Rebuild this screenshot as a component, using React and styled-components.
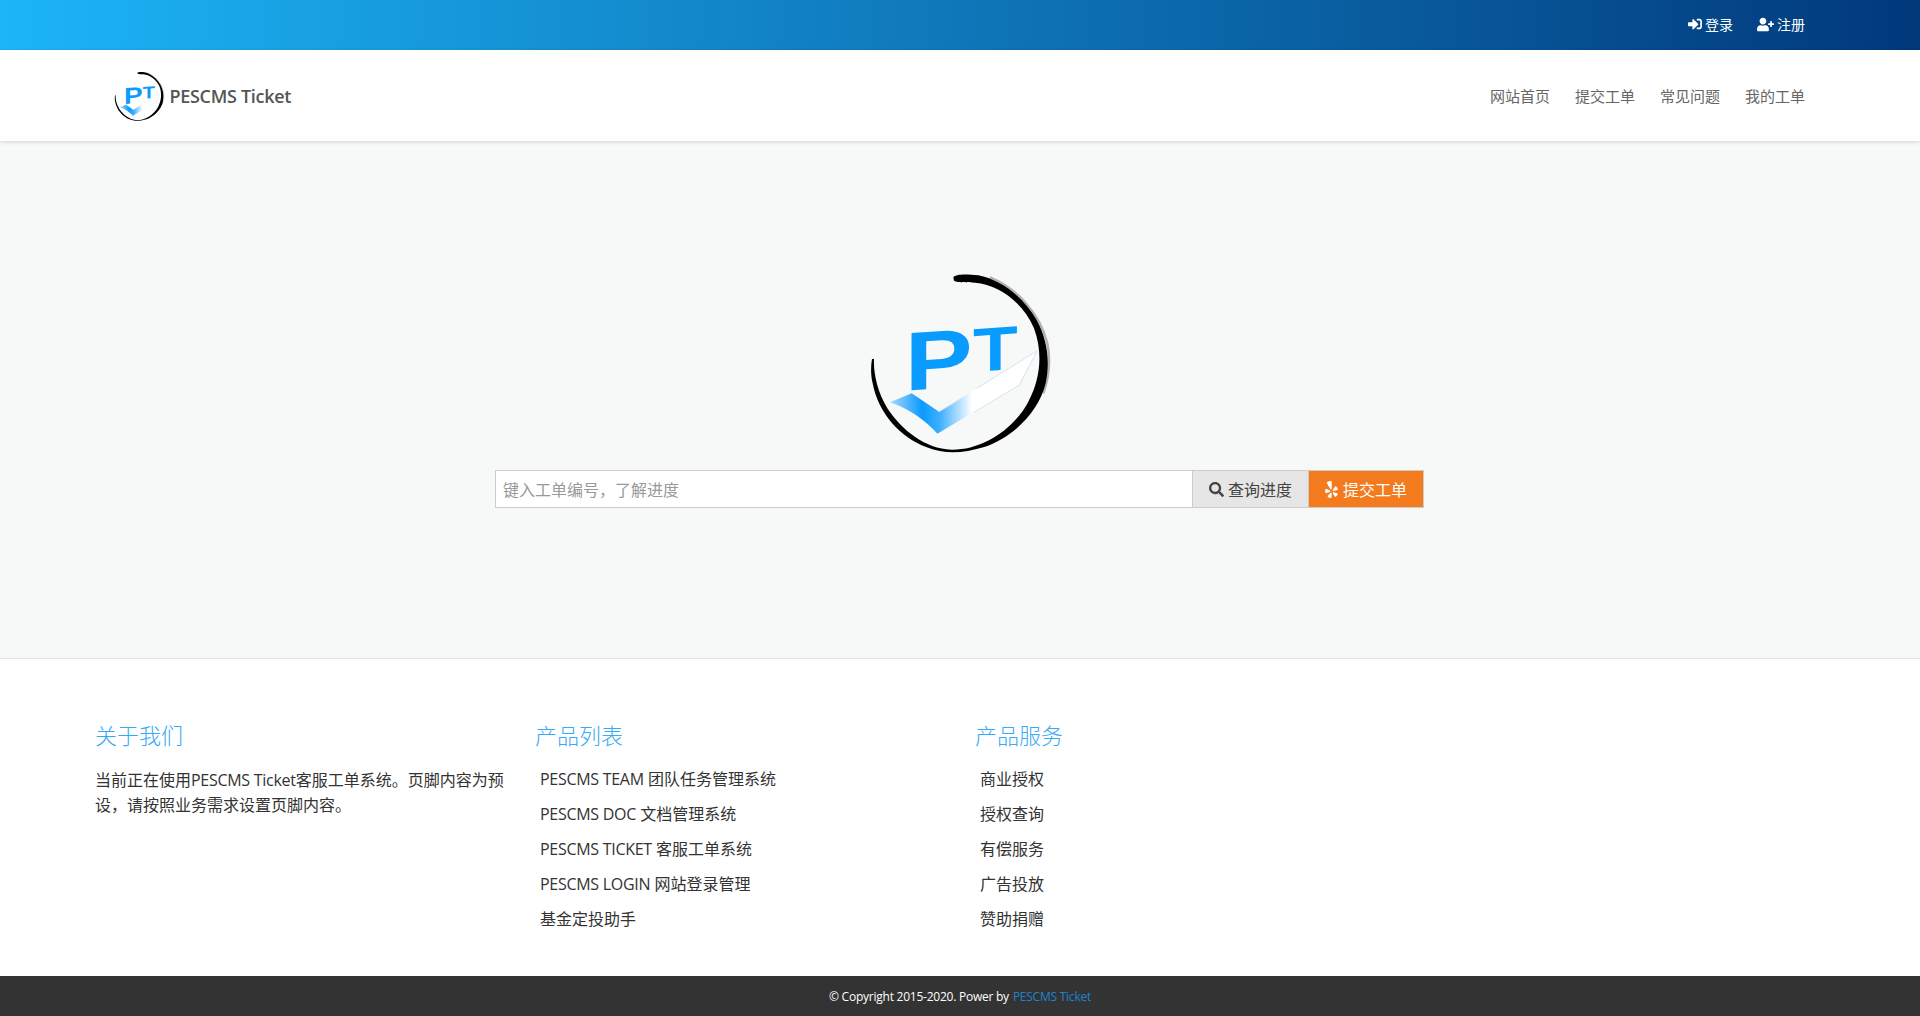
import React from 'react'
import styled, { createGlobalStyle } from 'styled-components'
import { FaSignInAlt, FaUserPlus, FaSearch, FaYelp } from 'react-icons/fa'

const products = [
    { latin: 'PESCMS TEAM', name: ' 团队任务管理系统' },
    { latin: 'PESCMS DOC', name: ' 文档管理系统' },
    { latin: 'PESCMS TICKET', name: ' 客服工单系统' },
    { latin: 'PESCMS LOGIN', name: ' 网站登录管理' },
    { latin: '', name: '基金定投助手' },
]
const services = ['商业授权', '授权查询', '有偿服务', '广告投放', '赞助捐赠']
const navItems = ['网站首页', '提交工单', '常见问题', '我的工单']

const Logo = ({ size }) => (
    <LogoSvg $size={size} viewBox="0 0 660 600">
        <defs>
            <linearGradient id="checkFill" x1="120" y1="0" x2="560" y2="0" gradientUnits="userSpaceOnUse">
                <stop offset="0" stopColor="#a8d8fd" />
                <stop offset="0.22" stopColor="#0a9bff" />
                <stop offset="0.34" stopColor="#3fb0ff" />
                <stop offset="0.56" stopColor="#ffffff" />
                <stop offset="1" stopColor="#ffffff" />
            </linearGradient>
        </defs>
        <path
            d="M120 427 L185 400 L267 455 L562 272 L508 375 L262 521 C225 480 175 445 120 427 Z"
            fill="url(#checkFill)"
        />
        <path d="M340 412 L267 455 M562 272 L508 375 L370 458 M562 272 L380 385" fill="none" stroke="#d3e3f4" strokeWidth="3" />
        <text x="0" y="0" fontFamily="'Liberation Sans', sans-serif" fontWeight="700" fontSize="250" fill="#0a9bff" transform="matrix(1.22 -0.08 0 1 164 392)">P</text>
        <text x="0" y="0" fontFamily="'Liberation Sans', sans-serif" fontWeight="700" fontSize="186" fill="#0a9bff" transform="matrix(1.18 -0.08 0 1 369 336)">T</text>
        <path
            d="M420 52 C500 85 570 160 592 250 C602 300 598 350 580 400"
            fill="none"
            stroke="#777"
            strokeOpacity="0.55"
            strokeWidth="7"
        />
        <path
            d="M310 52 C318 42 345 42 385 46 C450 58 520 110 560 180 C590 235 602 300 587 370 C567 455 490 532 400 562 C340 580 285 584 230 562 C150 532 85 460 68 370 C62 345 62 320 66 297 L72 297 C70 340 82 395 112 445 C155 510 225 567 305 569 C395 570 490 510 535 425 C570 360 580 280 552 205 C520 130 450 75 375 68 C350 66 325 70 312 62 Z"
            fill="#000"
        />
    </LogoSvg>
)

const App = () => {
    return (
        <Page>
            <GlobalStyle />
            <TopBar>
                <TopLink><FaSignInAlt size={14} /> 登录</TopLink>
                <TopLink><FaUserPlus size={17} /> 注册</TopLink>
            </TopBar>

            <NavBar>
                <Brand>
                    <Logo size={55} />
                    <BrandName>PESCMS Ticket</BrandName>
                </Brand>
                <NavMenu>
                    {navItems.map((item) => <NavLink key={item}>{item}</NavLink>)}
                </NavMenu>
            </NavBar>

            <Hero>
                <Logo size={200} />
                <SearchForm onSubmit={(e) => e.preventDefault()}>
                    <SearchInput type="text" placeholder="键入工单编号，了解进度" />
                    <QueryButton><FaSearch size={15} /> 查询进度</QueryButton>
                    <SubmitButton><FaYelp size={17} /> 提交工单</SubmitButton>
                </SearchForm>
            </Hero>

            <Footer>
                <Column>
                    <ColumnTitle>关于我们</ColumnTitle>
                    <About>当前正在使用<Latin>PESCMS Ticket</Latin>客服工单系统。页脚内容为预设，请按照业务需求设置页脚内容。</About>
                </Column>
                <Column>
                    <ColumnTitle>产品列表</ColumnTitle>
                    <LinkList>
                        {products.map((item) => <LinkItem key={item.name}><Latin>{item.latin}</Latin>{item.name}</LinkItem>)}
                    </LinkList>
                </Column>
                <Column>
                    <ColumnTitle>产品服务</ColumnTitle>
                    <LinkList>
                        {services.map((item) => <LinkItem key={item}>{item}</LinkItem>)}
                    </LinkList>
                </Column>
            </Footer>

            <CopyRight>
                © Copyright 2015-2020. Power by <CopyLink>PESCMS Ticket</CopyLink>
            </CopyRight>
        </Page>
    )
}

export default App

const GlobalStyle = createGlobalStyle`
    html, body {
        margin: 0;
        padding: 0;
        background: #fff;
    }
    * {
        box-sizing: border-box;
    }
`
const Page = styled.div`
    height: 1016px;
    overflow: hidden;
    font-family: "Open Sans", "Noto Sans CJK SC", sans-serif;
    color: #333;
`
const TopBar = styled.div`
    height: 50px;
    display: flex;
    justify-content: flex-end;
    align-items: center;
    gap: 24px;
    padding: 0 115px 2px 0;
    background: linear-gradient(to right, #1cb5f7, #01397b);
`
const TopLink = styled.a`
    display: flex;
    align-items: center;
    gap: 3px;
    color: #fff;
    font-size: 14px;
`
const NavBar = styled.div`
    position: relative;
    height: 91px;
    display: flex;
    justify-content: space-between;
    align-items: center;
    padding: 0 115px 0 109px;
    background: #fff;
    box-shadow: 0 1px 4px rgba(0, 0, 0, 0.15);
`
const Brand = styled.div`
    display: flex;
    align-items: center;
`
const LogoSvg = styled.svg`
    display: block;
    height: ${(props) => props.$size}px;
    width: ${(props) => props.$size * 1.1}px;
`
const BrandName = styled.span`
    font-size: 18px;
    font-weight: 600;
    letter-spacing: -0.3px;
    color: #555;
`
const NavMenu = styled.div`
    display: flex;
    gap: 25px;
`
const NavLink = styled.a`
    font-size: 15px;
    color: #666;
`
const Hero = styled.div`
    height: 518px;
    display: flex;
    flex-direction: column;
    align-items: center;
    padding: 119px 1px 0 0;
    background: #f7f9f8;
    border-bottom: 1px solid #dfe3e3;
`
const SearchForm = styled.form`
    display: flex;
    width: 929px;
    height: 38px;
    margin-top: 10px;
    border: 1px solid #ccc;
    background: #fff;
`
const SearchInput = styled.input`
    flex: 1;
    min-width: 0;
    padding: 1px 7px 0;
    border: none;
    outline: none;
    font-family: inherit;
    font-size: 16px;
    color: #333;
    &::placeholder {
        color: #999;
    }
`
const QueryButton = styled.button`
    width: 116px;
    display: flex;
    justify-content: center;
    align-items: center;
    gap: 4px;
    padding: 0;
    border: none;
    border-left: 1px solid #ccc;
    background: #e6e6e6;
    color: #444;
    font-family: inherit;
    font-size: 16px;
`
const SubmitButton = styled(QueryButton)`
    width: 115px;
    gap: 3px;
    padding-right: 2px;
    background: #f37b1d;
    color: #fff;
`
const Footer = styled.div`
    height: 317px;
    display: grid;
    grid-template-columns: repeat(4, 440px);
    padding: 59px 80px 0;
    background: #fff;
`
const Column = styled.div`
    padding: 0 15px;
`
const ColumnTitle = styled.div`
    font-size: 22px;
    font-weight: 300;
    line-height: 34px;
    color: #37a9f6;
`
const About = styled.p`
    margin: 16px 0 0;
    font-size: 16px;
    line-height: 25px;
    color: #333;
`
const Latin = styled.span`
    letter-spacing: -0.28px;
`
const LinkList = styled.div`
    display: flex;
    flex-direction: column;
    margin-top: 10px;
    padding-left: 5px;
`
const LinkItem = styled.a`
    font-size: 16px;
    line-height: 35px;
    color: #333;
`
const CopyRight = styled.div`
    height: 40px;
    display: flex;
    justify-content: center;
    align-items: center;
    gap: 4px;
    background: #333;
    color: #fff;
    font-size: 12px;
    letter-spacing: -0.24px;
`
const CopyLink = styled.a`
    color: #1b84d1;
`
